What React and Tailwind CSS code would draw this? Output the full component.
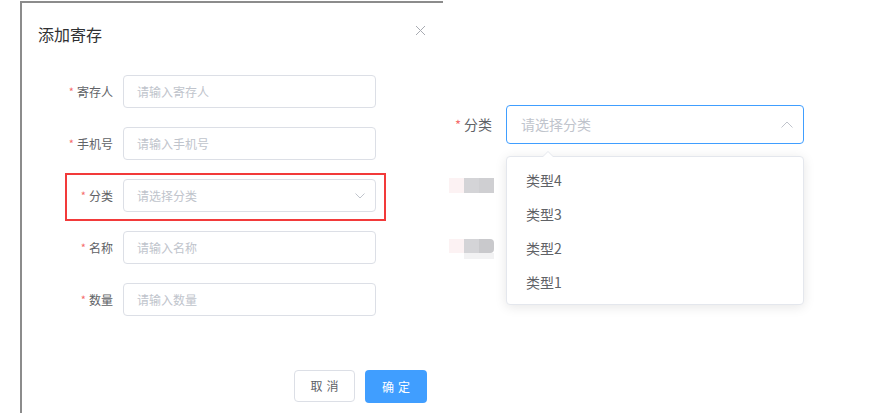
import React from "react";

const font = { fontFamily: '"Noto Sans CJK SC", "Noto Sans", sans-serif' };

function Row({ label, placeholder, select }) {
  return (
    <div className="flex items-center h-[33px]">
      <div className="w-[91px] flex justify-end items-center text-[12px] text-[#606266]">
        <span className="text-[#f56c6c] mr-[3px] text-[11px]">*</span>
        <span>{label}</span>
      </div>
      <div className="ml-[10px] w-[253px] h-[33px] border border-[#dcdfe6] rounded-[4px] flex items-center justify-between pl-[13px] pr-[10px] text-[12px] text-[#c0c4cc]">
        <span>{placeholder}</span>
        {select && (
          <svg width="10" height="6" viewBox="0 0 10 6" fill="none">
            <path d="M0.5 0.5 L5 5 L9.5 0.5" stroke="#c0c4cc" strokeWidth="1" />
          </svg>
        )}
      </div>
    </div>
  );
}

export default function App() {
  return (
    <div className="w-[886px] h-[413px] bg-white flex overflow-hidden" style={font}>
      {/* Left dialog */}
      <div className="ml-[20px] mt-[1px] w-[423px] h-[412px] border-l-2 border-t-2 border-[#8c8c8c] flex flex-col">
        <div className="flex items-center justify-between pl-[16px] pr-[16px] pt-[20px] h-[42px]">
          <span className="text-[16px] leading-[20px] text-[#303133]">添加寄存</span>
          <svg width="11" height="11" viewBox="0 0 11 11" className="mt-[-8px] mr-[1px]">
            <path d="M1 1 L10 10 M10 1 L1 10" stroke="#a8abb2" strokeWidth="1" />
          </svg>
        </div>
        <div className="mt-[30px] flex flex-col gap-[19px]">
          <Row label="寄存人" placeholder="请输入寄存人" />
          <Row label="手机号" placeholder="请输入手机号" />
          <div className="relative">
            <Row label="分类" placeholder="请选择分类" select />
            <div className="absolute left-[43px] top-[-6px] w-[321px] h-[48px] border-2 border-[#f23a3a]" />
          </div>
          <Row label="名称" placeholder="请输入名称" />
          <Row label="数量" placeholder="请输入数量" />
        </div>
        <div className="mt-[54px] flex justify-end gap-[10px] pr-[16px]">
          <button className="w-[61px] h-[32px] border border-[#dcdfe6] rounded-[4px] bg-white text-[12px] text-[#606266] tracking-[4px] pl-[4px]">
            取消
          </button>
          <button className="w-[62px] h-[33px] rounded-[4px] bg-[#409eff] text-[12px] text-white tracking-[4px] pl-[4px]">
            确定
          </button>
        </div>
      </div>

      {/* Right: open select */}
      <div className="relative flex-1">
        <div className="flex items-center mt-[105px] ml-[12px]">
          <div className="w-[38px] flex items-center whitespace-nowrap text-[14px] text-[#606266]">
            <span className="text-[#f56c6c] mr-[3px] text-[13px]">*</span>
            <span>分类</span>
          </div>
          <div className="ml-[13px] w-[298px] h-[39px] border border-[#409eff] rounded-[4px] flex items-center justify-between pl-[14px] pr-[10px] text-[14px] text-[#c0c4cc]">
            <span>请选择分类</span>
            <svg width="12" height="7" viewBox="0 0 12 7" fill="none">
              <path d="M0.5 6.5 L6 1 L11.5 6.5" stroke="#c0c4cc" strokeWidth="1" />
            </svg>
          </div>
        </div>

        {/* blurred hidden labels */}
        <div className="absolute left-[6px] top-[178px] flex">
          <div className="w-[15px] h-[15px] bg-[#fcf2f3]" />
          <div className="w-[15px] h-[15px] bg-[#d4d4d7]" />
          <div className="w-[15px] h-[15px] bg-[#cfcfd2]" />
        </div>
        <div className="absolute left-[6px] top-[239px] flex">
          <div className="w-[15px] h-[14px] bg-[#fcf2f3]" />
          <div className="flex flex-col">
            <div className="flex">
              <div className="w-[15px] h-[14px] bg-[#d4d4d7]" />
              <div className="w-[15px] h-[14px] bg-[#c9c9cc] rounded-r-[4px]" />
            </div>
            <div className="w-[30px] h-[6px] bg-[#f2f2f3]" />
          </div>
        </div>

        {/* dropdown */}
        <div className="absolute left-[63px] top-[156px] w-[298px] h-[149px] bg-white border border-[#e4e7ed] rounded-[4px] shadow-[0_2px_12px_0_rgba(0,0,0,0.1)] py-[6px]">
          <div className="absolute left-[35px] top-[-6px] w-0 h-0 border-l-[6px] border-r-[6px] border-b-[6px] border-l-transparent border-r-transparent border-b-[#e4e7ed]" />
          <div className="absolute left-[36px] top-[-5px] w-0 h-0 border-l-[5px] border-r-[5px] border-b-[5px] border-l-transparent border-r-transparent border-b-white" />
          {["类型4", "类型3", "类型2", "类型1"].map((t) => (
            <div key={t} className="h-[34px] flex items-center pl-[19px] text-[14px] text-[#606266]">
              {t}
            </div>
          ))}
        </div>
      </div>
    </div>
  );
}
